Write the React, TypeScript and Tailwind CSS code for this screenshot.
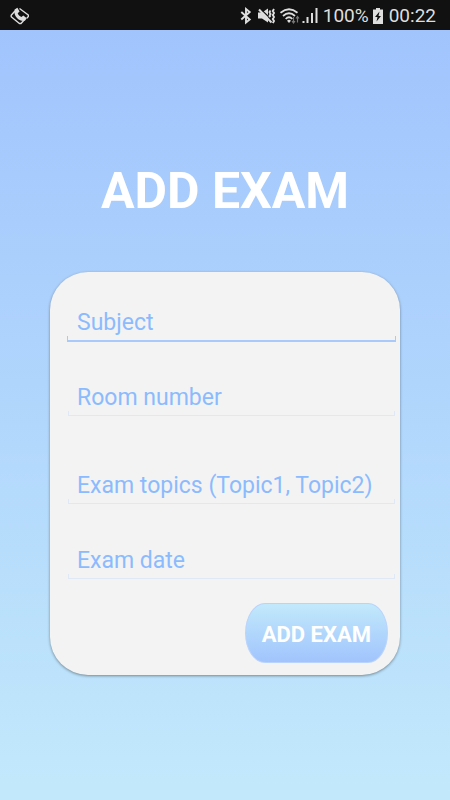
import { useState } from "react"
import type { FormEvent } from "react"

type Exam = { subject: string; room: string; topics: string; date: string }

function StatusBar() {
    return (
        <header className="flex h-[30px] items-center bg-[#111111] pt-0.5 pl-2 pr-3.5 text-[#dedede]">
            <svg width="24" height="24" viewBox="0 0 24 24" fill="none" aria-hidden="true">
                <g stroke="currentColor" strokeWidth="1.4" strokeLinejoin="round">
                    <path d="M7 7 3.2 11.2v1.600l8.200 6.700h1.600l2.500-2.700" />
                    <path d="M11.500 4.500 20.300 11v1.600l-1.500 1.700" />
                </g>
                <path d="M6.600 5.500 9.400 3.800 11.600 7.600 9.700 9.300C10.300 11 11.600 12.300 13.400 12.900L15.300 11.400 18.800 14.300 16.900 16.700C15 17.500 11.600 16.600 9.200 14.200 6.700 11.700 5.800 8.200 6.600 5.500Z" fill="currentColor" />
            </svg>
            <div className="ml-auto flex items-center">
                <svg width="12" height="18" viewBox="0 0 12 18" fill="none" stroke="currentColor" strokeWidth="1.9" aria-hidden="true">
                    <path d="M1.300 5 9.700 12.500 6 15.500V2L9.700 5 1.300 12.500" />
                </svg>
                <svg className="ml-1.5" width="18" height="18" viewBox="0 0 18 18" aria-hidden="true">
                    <path d="M0 5.500h4l6-4v14l-6-4H0Z" fill="currentColor" />
                    <path d="M3 2.500 14.500 13.500" stroke="#111111" strokeWidth="1.300" />
                    <path d="M1 2.500 13.500 15.500" stroke="currentColor" strokeWidth="2" />
                    <path d="m12.500 3.500-1 1.500 1 2-1 2 1 1M16 2l-1.200 2 1.200 2-1.200 2 1.200 2-1.200 2 1.200 2-1.200 2" fill="none" stroke="currentColor" strokeWidth="1.900" />
                </svg>
                <svg className="ml-1" width="21" height="18" viewBox="0 0 21 18" fill="none" aria-hidden="true">
                    <g stroke="currentColor" strokeWidth="1.800">
                        <path d="M0.500 5.800Q9 -1.200 17.500 5.800" />
                        <path d="M3 9Q9 3.500 15 9" />
                        <path d="M5.700 12Q9 8.500 12.300 12" />
                    </g>
                    <path d="M7 13.700Q9 12 11 13.700L9 16Z" fill="currentColor" />
                    <path d="M13.500 10v6m-1.500-2 1.500 2 1.500-2M17.500 15.500V9.500m-1.500 2 1.500-2 1.500 2" stroke="#777777" strokeWidth="1.200" />
                </svg>
                <svg width="18" height="18" viewBox="0 0 18 18" fill="currentColor" aria-hidden="true">
                    <path d="M1.500 14h2v2h-2ZM5.500 10h2v6h-2ZM10 6h2v10h-2ZM14.500 1h2v15h-2Z" />
                </svg>
                <span className="ml-1 text-[19px] leading-7">100%</span>
                <svg className="ml-1" width="10" height="16" viewBox="0 0 10 16" aria-hidden="true">
                    <path d="M3 0h4v1.500h3V16H0V1.500h3Z" fill="currentColor" />
                    <path d="M6.500 3.500 2 9h2.500L3.500 13.500 8 8H5.500Z" fill="#111111" />
                </svg>
                <time className="ml-1.5 text-[19px] leading-7">00:22</time>
            </div>
        </header>
    )
}

type FieldProps = {
    name: keyof Exam
    label: string
    value: string
    active?: boolean
    onChange: (name: keyof Exam, value: string) => void
}

function Field({ name, label, value, active, onChange }: FieldProps) {
    return (
        <div className="relative">
            <input
                id={name}
                name={name}
                value={value}
                onChange={e => onChange(name, e.target.value)}
                placeholder=" "
                className="peer block h-8 w-full bg-transparent px-2.5 text-[23px] leading-8 text-[#8bbbfe] focus:outline-none"
            />
            {/* sits in the box like a hint, gone once something is typed */}
            <label
                htmlFor={name}
                className="invisible absolute top-0 left-2.5 cursor-text text-[23px] leading-8 whitespace-nowrap text-[#8bbbfe] peer-placeholder-shown:visible"
            >
                {label}
            </label>
            {active
                ? <span className="-mt-[3px] block h-1.5 border-x border-b-2 border-[#a9c8fb]" />
                : <span className="mx-px -mt-[3px] mb-px block h-[5px] border-x border-b border-[#dfe8f4]" />}
        </div>
    )
}

export default function App() {
    const [exam, setExam] = useState<Exam>({ subject: "", room: "", topics: "", date: "" })

    const update = (name: keyof Exam, value: string) => {
        setExam(prev => ({ ...prev, [name]: value }))
    }

    const addExam = (e: FormEvent) => {
        e.preventDefault()
        setExam({ subject: "", room: "", topics: "", date: "" })
    }

    return (
        <div className="flex min-h-screen flex-col bg-[#a1c4fd] font-['Roboto',sans-serif]">
            <StatusBar />
            <main className="flex-1 bg-linear-to-b from-[#a1c4fd] to-[#c2e9fb] px-[50px] pt-[131px]">
                <h1 className="text-center text-[50px] leading-[60px] font-bold whitespace-nowrap text-white">ADD EXAM</h1>
                <form
                    onSubmit={addExam}
                    className="mt-[51px] rounded-[38px] bg-[#f3f3f3] pt-[35px] pr-1 pb-3 pl-[17px] shadow-[0_1px_3px_rgba(0,0,0,0.4)]"
                >
                    <div className="flex flex-col gap-10">
                        <Field name="subject" label="Subject" value={exam.subject} onChange={update} active />
                        <Field name="room" label="Room number" value={exam.room} onChange={update} />
                    </div>
                    <div className="mt-[53px] flex flex-col gap-10">
                        <Field name="topics" label="Exam topics (Topic1, Topic2)" value={exam.topics} onChange={update} />
                        <Field name="date" label="Exam date" value={exam.date} onChange={update} />
                    </div>
                    <div className="mt-[23px] mr-2 flex justify-end">
                        <button
                            type="submit"
                            className="h-[60px] rounded-[20px/30px] border border-[#b9d3fb] bg-linear-to-t from-[#a1c4fd] to-[#c2e9fb] px-4 pt-0.5 text-[22px] font-bold whitespace-nowrap text-white"
                        >
                            ADD EXAM
                        </button>
                    </div>
                </form>
            </main>
        </div>
    )
}
